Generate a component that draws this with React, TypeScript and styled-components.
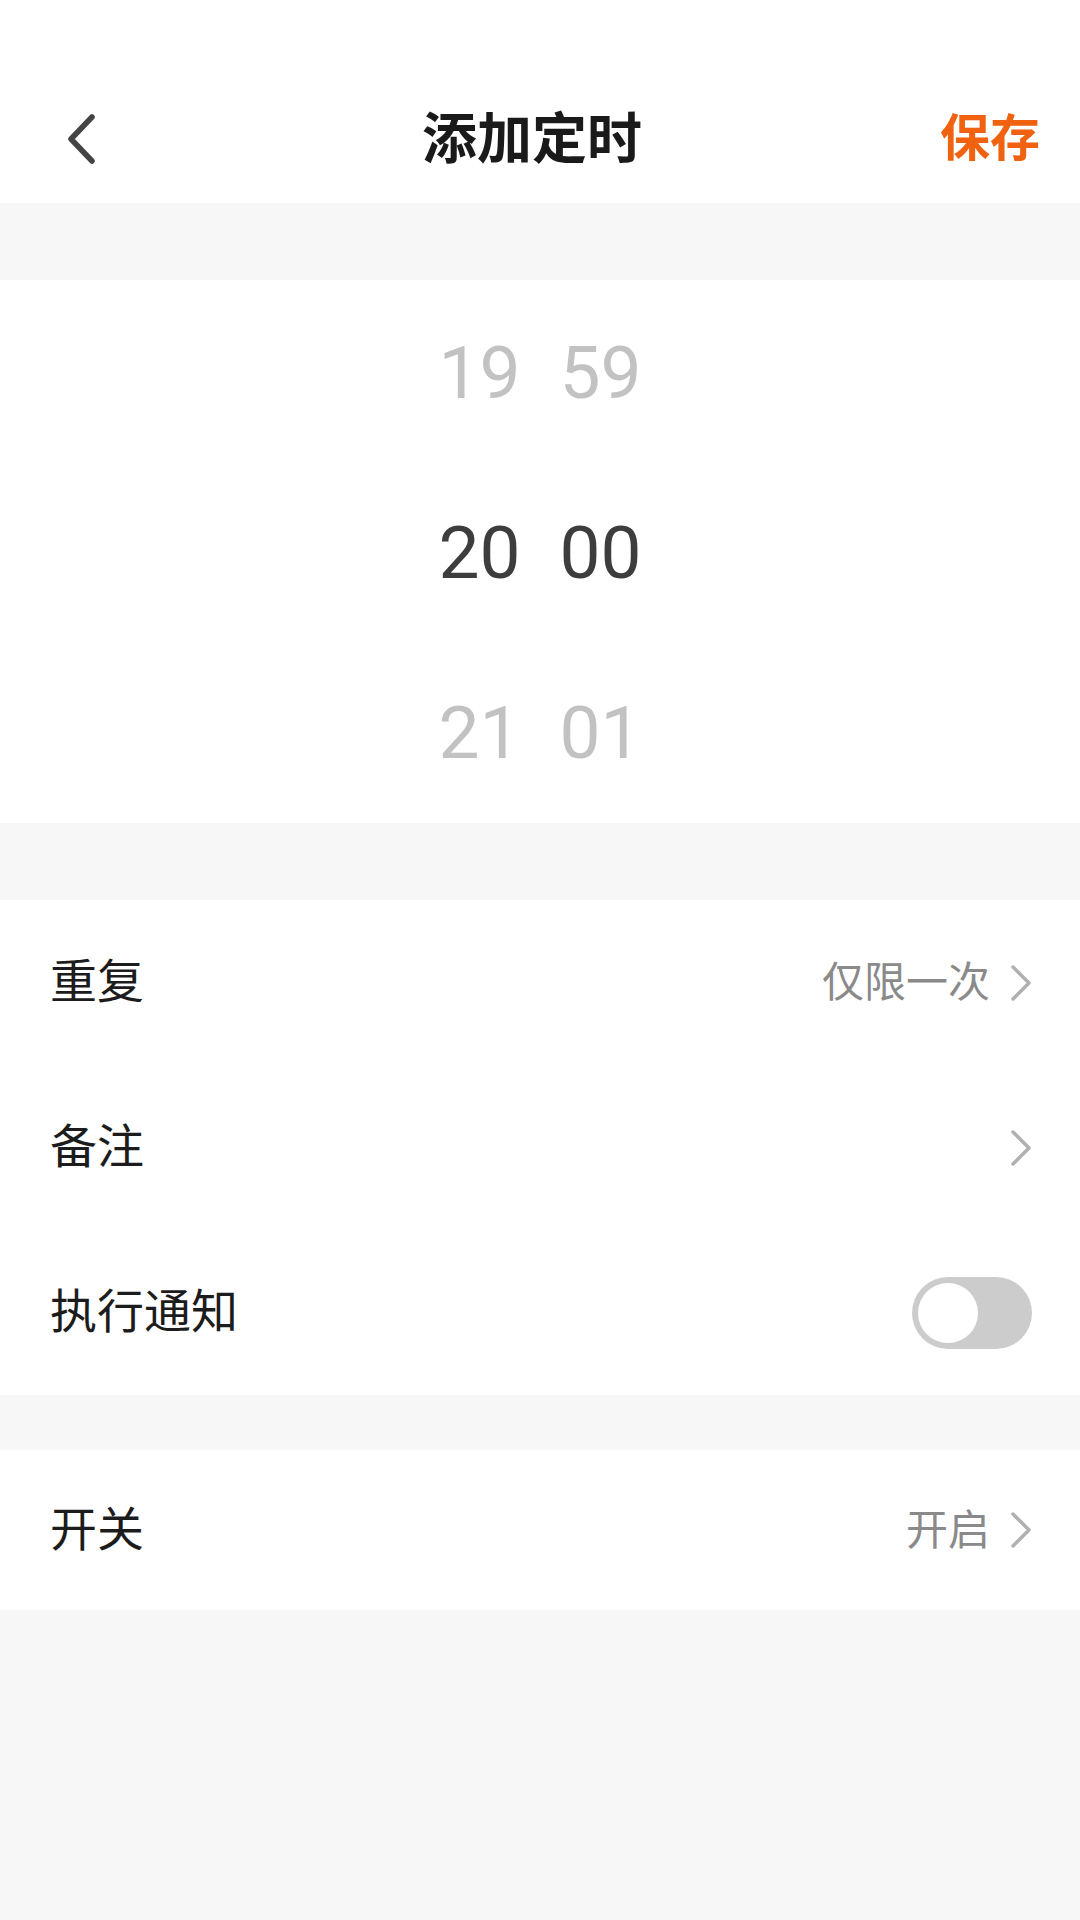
import React, { useState } from "react";
import styled, { createGlobalStyle } from "styled-components";

const GlobalStyle = createGlobalStyle`
  html, body {
    margin: 0;
    padding: 0;
    background: #f7f7f7;
  }
  body {
    font-family: "Noto Sans CJK SC", "Noto Sans", sans-serif;
  }
`;

const Page = styled.div`
  width: 1080px;
  min-height: 1920px;
  background: #f7f7f7;
  display: flex;
  flex-direction: column;
`;

const Header = styled.header`
  background: #ffffff;
  padding-top: 74px;
`;

const NavBar = styled.div`
  height: 129px;
  display: grid;
  grid-template-columns: 1fr auto 1fr;
  align-items: center;
`;

const BackButton = styled.button`
  justify-self: start;
  margin-left: 66px;
  padding: 0;
  border: none;
  background: transparent;
  display: flex;
  align-items: center;
  cursor: pointer;
`;

const Title = styled.h1`
  margin: 0 16px 10px 0;
  font-size: 55px;
  font-weight: 700;
  color: #1a1a1a;
  letter-spacing: 0;
`;

const SaveButton = styled.button`
  justify-self: end;
  margin: 0 40px 10px 0;
  padding: 0;
  border: none;
  background: transparent;
  font-family: "Noto Sans CJK SC", sans-serif;
  font-size: 50px;
  font-weight: 700;
  color: #f0620f;
  cursor: pointer;
`;

const Gap = styled.div<{ h: number }>`
  height: ${(p) => p.h}px;
  background: #f7f7f7;
`;

const Picker = styled.section`
  background: #ffffff;
  padding-top: 3px;
  height: 540px;
  display: flex;
  justify-content: center;
  gap: 21px;
`;

const Wheel = styled.div`
  width: 100px;
  display: flex;
  flex-direction: column;
`;

const WheelItem = styled.div<{ active?: boolean }>`
  height: 180px;
  display: flex;
  align-items: center;
  justify-content: center;
  font-family: Roboto, "Liberation Sans", sans-serif;
  font-size: 73px;
  font-weight: 400;
  color: ${(p) => (p.active ? "#3d3d3d" : "#c2c2c2")};
`;

const Card = styled.section`
  background: #ffffff;
  display: flex;
  flex-direction: column;
`;

const Row = styled.div<{ h: number }>`
  height: ${(p) => p.h}px;
  padding: 0 48px 0 50px;
  display: flex;
  align-items: center;
  justify-content: space-between;
`;

const Label = styled.span`
  margin-bottom: 10px;
  font-size: 47px;
  color: #1c1c1c;
`;

const Trail = styled.div`
  display: flex;
  align-items: center;
  gap: 20px;
`;

const Value = styled.span`
  margin-bottom: 8px;
  font-size: 42px;
  color: #8a8a8a;
`;

const Track = styled.button<{ on: boolean }>`
  width: 120px;
  height: 72px;
  border-radius: 36px;
  border: none;
  padding: 6px;
  background: ${(p) => (p.on ? "#f0620f" : "#cccccc")};
  display: flex;
  justify-content: ${(p) => (p.on ? "flex-end" : "flex-start")};
  align-items: center;
  cursor: pointer;
`;

const Knob = styled.span`
  width: 60px;
  height: 60px;
  border-radius: 50%;
  background: #ffffff;
`;

const BackIcon = () => (
  <svg width="30" height="50" viewBox="0 0 30 50">
    <polyline
      points="26,3 5,25 26,47"
      fill="none"
      stroke="#444444"
      strokeWidth="5.5"
      strokeLinecap="round"
      strokeLinejoin="round"
    />
  </svg>
);

const Chevron = () => (
  <svg width="22" height="36" viewBox="0 0 22 36">
    <polyline
      points="3,2 19,18 3,34"
      fill="none"
      stroke="#b0b0b0"
      strokeWidth="3.5"
      strokeLinecap="round"
      strokeLinejoin="round"
    />
  </svg>
);

const hours = ["19", "20", "21"];
const minutes = ["59", "00", "01"];

const App: React.FC = () => {
  const [notify, setNotify] = useState(false);

  return (
    <Page>
      <GlobalStyle />
      <Header>
        <NavBar>
          <BackButton aria-label="back">
            <BackIcon />
          </BackButton>
          <Title>添加定时</Title>
          <SaveButton>保存</SaveButton>
        </NavBar>
      </Header>
      <Gap h={77} />
      <Picker>
        <Wheel>
          {hours.map((h, i) => (
            <WheelItem key={h} active={i === 1}>
              {h}
            </WheelItem>
          ))}
        </Wheel>
        <Wheel>
          {minutes.map((m, i) => (
            <WheelItem key={m} active={i === 1}>
              {m}
            </WheelItem>
          ))}
        </Wheel>
      </Picker>
      <Gap h={77} />
      <Card>
        <Row h={165}>
          <Label>重复</Label>
          <Trail>
            <Value>仅限一次</Value>
            <Chevron />
          </Trail>
        </Row>
        <Row h={165}>
          <Label>备注</Label>
          <Trail>
            <Chevron />
          </Trail>
        </Row>
        <Row h={165}>
          <Label>执行通知</Label>
          <Track on={notify} onClick={() => setNotify(!notify)}>
            <Knob />
          </Track>
        </Row>
      </Card>
      <Gap h={55} />
      <Card>
        <Row h={160}>
          <Label>开关</Label>
          <Trail>
            <Value>开启</Value>
            <Chevron />
          </Trail>
        </Row>
      </Card>
    </Page>
  );
};

export default App;
